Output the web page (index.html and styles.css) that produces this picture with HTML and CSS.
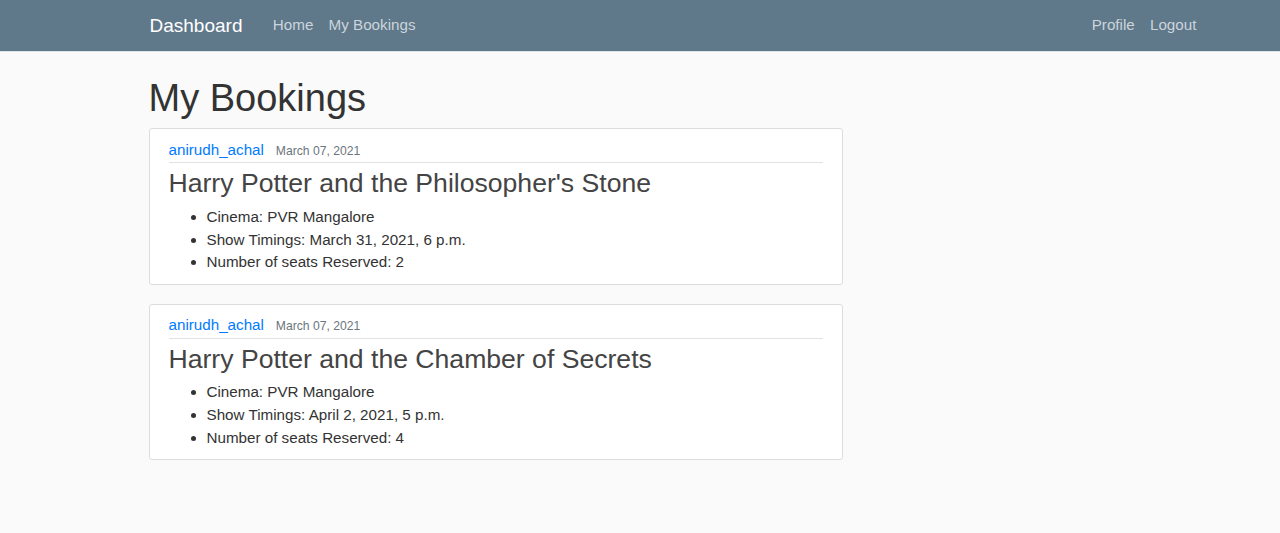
FILE: index.html
```html
<!DOCTYPE html>
<html lang="en">
<head>
<meta charset="utf-8">
<title>My Bookings</title>
<link rel="stylesheet" href="styles.css">
</head>
<body>
<header class="site-header">
  <nav class="navbar">
    <div class="container nav-inner">
      <div class="nav-left">
        <a class="brand" href="#">Dashboard</a>
        <a class="nav-link" href="#">Home</a>
        <a class="nav-link" href="#">My Bookings</a>
      </div>
      <div class="nav-right">
        <a class="nav-link" href="#">Profile</a>
        <a class="nav-link" href="#">Logout</a>
      </div>
    </div>
  </nav>
</header>
<main class="container main">
  <div class="col-main">
    <h1 class="page-title">My Bookings</h1>
    <article class="content-section">
      <div class="article-metadata">
        <a class="author" href="#">anirudh_achal</a>
        <small class="date">March 07, 2021</small>
      </div>
      <h2 class="article-title">Harry Potter and the Philosopher's Stone</h2>
      <ul class="details">
        <li>Cinema: PVR Mangalore</li>
        <li>Show Timings: March 31, 2021, 6 p.m.</li>
        <li>Number of seats Reserved: 2</li>
      </ul>
    </article>
    <article class="content-section">
      <div class="article-metadata">
        <a class="author" href="#">anirudh_achal</a>
        <small class="date">March 07, 2021</small>
      </div>
      <h2 class="article-title">Harry Potter and the Chamber of Secrets</h2>
      <ul class="details">
        <li>Cinema: PVR Mangalore</li>
        <li>Show Timings: April 2, 2021, 5 p.m.</li>
        <li>Number of seats Reserved: 4</li>
      </ul>
    </article>
  </div>
</main>
</body>
</html>
```

FILE: styles.css
```css
* { box-sizing: border-box; }

html, body {
  margin: 0;
  padding: 0;
}

body {
  background: #fafafa;
  color: #333333;
  font-family: "Liberation Sans", Arial, sans-serif;
  font-size: 15.2px;
  line-height: 1.5;
}

a { text-decoration: none; }

.container {
  width: 1083px;
  margin-left: 134px;
  padding: 0 14.5px;
}

.navbar {
  background-color: #5f788a;
  height: 52px;
  border-bottom: 1px solid #dfe4e8;
}

.nav-inner {
  height: 51px;
  padding: 0 13px 0 15.5px;
  display: flex;
  align-items: center;
  justify-content: space-between;
}

.nav-left, .nav-right {
  display: flex;
  align-items: center;
}

.brand {
  color: #ffffff;
  font-size: 19px;
  line-height: 28px;
  margin-right: 22.8px;
}

.nav-link {
  color: #cbd5db;
  padding: 0 7.6px;
  line-height: 22.8px;
}

.main {
  padding-top: 24px;
}

.col-main {
  width: 694px;
}

.page-title {
  font-size: 38px;
  font-weight: 500;
  line-height: 1.2;
  margin: 0 0 6.6px 0;
  color: #333333;
}

.content-section {
  background: #ffffff;
  padding: 9.5px 19px;
  border: 1px solid #dddddd;
  border-radius: 3px;
  margin-bottom: 19px;
}

.article-metadata {
  padding-bottom: 1px;
  margin-bottom: 4.8px;
  border-bottom: 1px solid #e3e3e3;
}

.author {
  color: #007bff;
  margin-right: 7.6px;
}

.date {
  color: #6c757d;
  font-size: 12.16px;
}

.article-title {
  color: #444444;
  font-size: 26.6px;
  font-weight: 500;
  line-height: 1.2;
  margin: 0 0 5.6px 0;
}

.details {
  margin: 0;
  padding-left: 38px;
}
```
